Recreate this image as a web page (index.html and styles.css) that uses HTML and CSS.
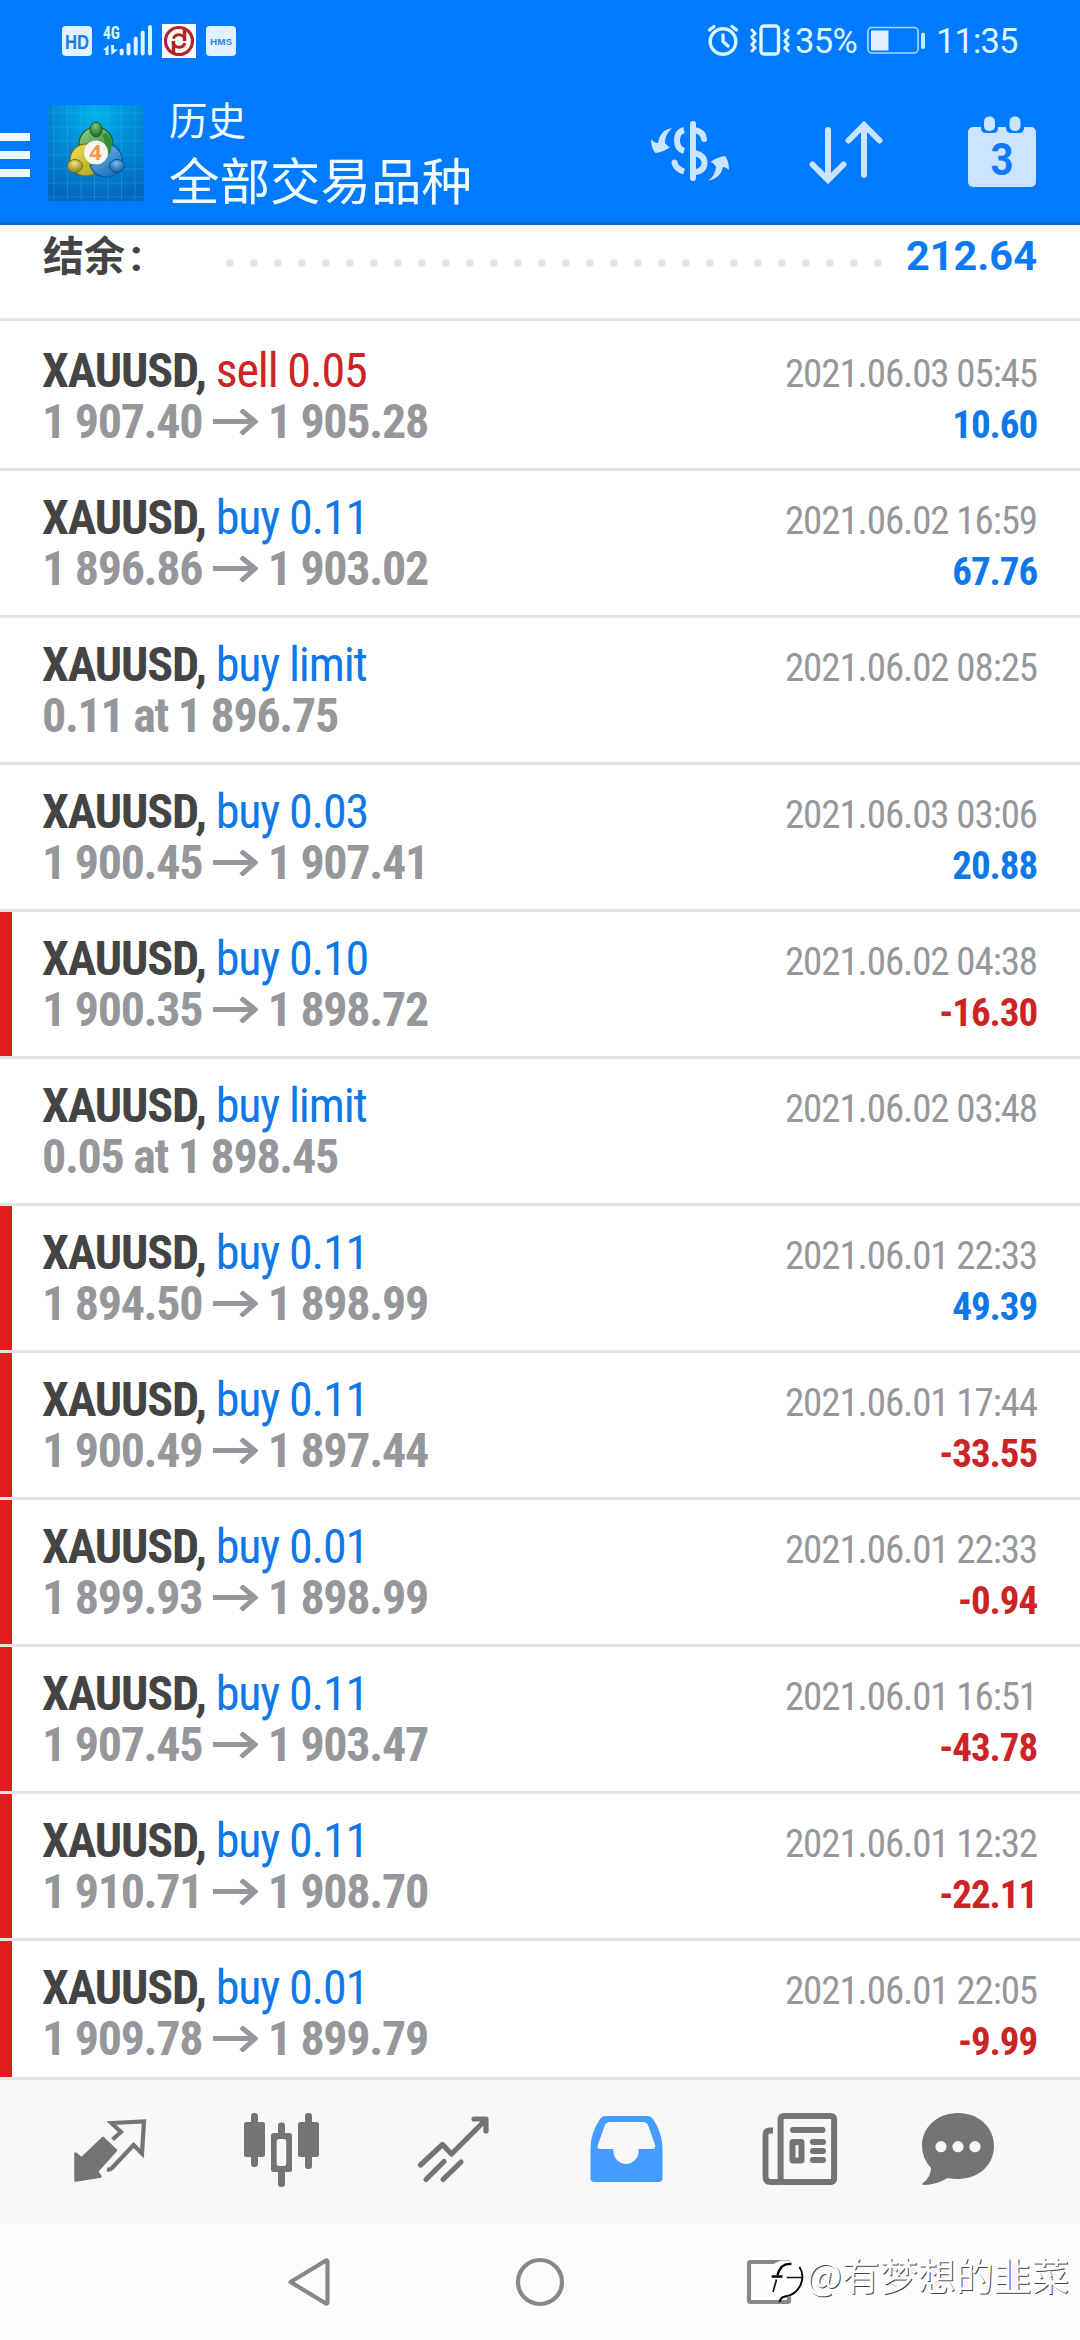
FILE: index.html
```html
<!DOCTYPE html>
<html lang="zh-CN">
<head>
<meta charset="utf-8">
<title>历史</title>
<link rel="stylesheet" href="styles.css">
</head>
<body>
<svg class="defs" aria-hidden="true">
  <symbol id="arrow" viewBox="0 0 45 26">
    <path d="M0 12.5H42M28 1L42 12.5L28 25" fill="none" stroke="currentColor" stroke-width="5"/>
  </symbol>
</svg>
<div class="app">
  <header class="top">
    <div class="status">
      <svg class="status-left" viewBox="0 0 540 80">
        <rect x="62" y="26" width="30" height="30" rx="4" fill="#e2f0ff"/>
        <text class="hd" x="77" y="48.5" text-anchor="middle" textLength="24" lengthAdjust="spacingAndGlyphs">HD</text>
        <text class="net" x="103" y="38.5" textLength="17" lengthAdjust="spacingAndGlyphs">4G</text>
        <path d="M103 50L108.500 45V55H105.500V50ZM111 45H114V49.500H118L111.500 55Z" fill="#d8f6ff"/>
        <path d="M121.700 50.500V53.500M128.500 45V53.500M135.700 38.500V53.500M142.700 32.500V53.500M150 27V53.500" stroke="#d8f6ff" stroke-width="4" stroke-linecap="round"/>
        <rect x="162" y="24" width="34" height="34" fill="#fff"/>
        <g fill="none" stroke="#b52424">
          <circle cx="179" cy="41" r="13.500" stroke-width="3.200"/>
          <circle cx="179" cy="41" r="6.200" stroke-width="3" stroke-dasharray="15.500 4" stroke-dashoffset="-2"/>
          <path d="M173.500 41V53M184.500 41V29" stroke-width="3.400"/>
        </g>
        <rect x="206" y="26" width="30" height="30" rx="4" fill="#e2f0ff"/>
        <text class="hms" x="221" y="44.500" text-anchor="middle" textLength="22" lengthAdjust="spacingAndGlyphs">HMS</text>
      </svg>
      <div class="status-right">
        <svg width="88" height="80" viewBox="706 0 88 80" fill="none" stroke="#d8f6ff" stroke-linecap="round">
          <circle cx="723" cy="41.500" r="12.800" stroke-width="3.400"/>
          <path d="M709.500 30L714 26.500M732 26.500L736.500 30M723 35V41.500L728 46" stroke-width="3.400"/>
          <rect x="761" y="26" width="17.500" height="28" rx="3" stroke-width="3.400"/>
          <path d="M752 30L755 33.500L752 37L755 41L752 44.500L755 48L752 51M788 30L785 33.500L788 37L785 41L788 44.500L785 48L788 51" stroke-width="3"/>
        </svg>
        <span class="percent">35%</span>
        <svg class="battery" width="60" height="80" viewBox="866 0 60 80">
          <rect x="868" y="27.500" width="50" height="25.500" rx="4" fill="none" stroke="#a6dbff" stroke-width="1.600"/>
          <rect x="871" y="30.500" width="17.500" height="20" fill="#e2f0ff"/>
          <rect x="921" y="32.500" width="4" height="16.500" rx="2" fill="#c4eaff"/>
        </svg>
        <span class="clock">11:35</span>
      </div>
    </div>
    <div class="bar">
      <div class="menu"><i></i><i></i><i></i></div>
      <svg class="logo" viewBox="0 0 96 96">
        <defs>
          <radialGradient id="bg" cx=".5" cy=".1" r=".9"><stop offset="0" stop-color="#00b4ea"/><stop offset=".5" stop-color="#0089d6"/><stop offset="1" stop-color="#0068be"/></radialGradient>
          <linearGradient id="gr" x2=".7" y2="1"><stop offset="0" stop-color="#9bd08c"/><stop offset="1" stop-color="#23852f"/></linearGradient>
          <linearGradient id="ye" x2="1" y2="1"><stop offset="0" stop-color="#efe25a"/><stop offset="1" stop-color="#a89c1c"/></linearGradient>
          <linearGradient id="bl" x2=".6" y2="1"><stop offset="0" stop-color="#83c4f0"/><stop offset="1" stop-color="#1672bd"/></linearGradient>
          <radialGradient id="gb" cx=".45" cy=".3" r=".7"><stop offset="0" stop-color="#82c676"/><stop offset="1" stop-color="#156a26"/></radialGradient>
          <radialGradient id="yb" cx=".45" cy=".3" r=".7"><stop offset="0" stop-color="#ece37c"/><stop offset="1" stop-color="#8c8518"/></radialGradient>
          <radialGradient id="bb" cx=".45" cy=".3" r=".7"><stop offset="0" stop-color="#79bbea"/><stop offset="1" stop-color="#095aa3"/></radialGradient>
        </defs>
        <rect width="96" height="96" fill="url(#bg)"/>
        <path d="M6 0V96M19.500 0V96M33 0V96M46.500 0V96M60 0V96M73.500 0V96M87 0V96M0 8H96M0 22H96M0 36H96M0 50H96M0 64H96M0 78H96M0 92H96" stroke="#58baf0" stroke-width=".7" opacity=".4"/>
        <circle cx="48" cy="39" r="17" fill="url(#gr)" stroke="#17632a" stroke-width="1.200"/>
        <circle cx="38" cy="55" r="16" fill="url(#ye)" stroke="#716c18" stroke-width="1.200"/>
        <path d="M58 39A16.500 16.500 0 1 1 42 60Q60 60 58 39Z" fill="url(#bl)" stroke="#0b559a" stroke-width="1.200"/>
        <path d="M58 28Q68 38 61 50L55 44Q59 37 54 30Z" fill="#2e9138"/>
        <ellipse cx="48" cy="24.500" rx="6" ry="7.500" fill="url(#gb)" stroke="#175e28"/>
        <ellipse cx="27" cy="61" rx="7.500" ry="6.500" fill="url(#yb)" stroke="#77711a"/>
        <ellipse cx="69" cy="61" rx="7.500" ry="6.500" fill="url(#bb)" stroke="#0a559b"/>
        <circle cx="48" cy="47.500" r="12" fill="#f5f5f3"/>
        <text class="four" x="47.500" y="55" text-anchor="middle">4</text>
      </svg>
      <div class="titles">
        <div class="title">历史</div>
        <div class="subtitle">全部交易品种</div>
      </div>
      <svg class="actions" viewBox="640 80 440 142" fill="none" stroke="#cbe4ff" stroke-width="6" stroke-linecap="round">
        <path d="M693 124V178"/>
        <path d="M684 130Q677 132 677 140.500Q677 149 684 151" stroke-linecap="butt"/>
        <path d="M674.500 163Q676 169 684 171.500" stroke-linecap="butt"/>
        <circle cx="674.500" cy="162.500" r="2.900" fill="#cbe4ff" stroke="none"/>
        <path d="M694 130Q703 131 704 139M694 153Q704.500 155 704.500 163Q704.500 171 694 172.500"/>
        <g fill="#cbe4ff" stroke="none">
          <path d="M672 128Q660 130 658 143Q654 143 651 139Q651 148 655.500 153Q664 152 670 147Q667 146 665 143Q665 134 672 128Z"/>
          <path d="M708 181Q715 176 716 167Q714 163 710.500 162Q717 157 725 156Q729 161 729 170Q726 167 723 167Q721 178 708 181Z"/>
        </g>
        <path d="M828 130V179M812.500 164.500L828 180L843.500 164.500M864 175V126M848.500 140.500L864 125L879.500 140.500"/>
        <g stroke="none" fill="#cbe4ff">
          <rect x="968" y="127" width="68" height="60" rx="5"/>
          <path d="M981 127H998V128Q998 133 993 133H986Q981 133 981 128ZM1006 127H1024V128Q1024 133 1019 133H1011Q1006 133 1006 128Z" fill="#007aff"/>
          <rect x="984" y="116.500" width="11" height="14.500" rx="5"/>
          <rect x="1009.500" y="116.500" width="11" height="14.500" rx="5"/>
        </g>
        <text class="day" x="1002" y="174.500" text-anchor="middle" textLength="23" lengthAdjust="spacingAndGlyphs">3</text>
      </svg>
    </div>
  </header>

  <main class="history">
    <section class="balance"><span class="label">结余<span class="colon">:</span></span><span class="dots"></span><span class="amount">212.64</span></section>
    <article class="deal first"><div class="line"><span class="sym"><b>XAUUSD,</b> <span class="sell">sell 0.05</span></span><time>2021.06.03 05:45</time></div><div class="line"><span class="price">1 907.40 <svg><use href="#arrow"/></svg> 1 905.28</span><span class="gain">10.60</span></div></article>
    <article class="deal"><div class="line"><span class="sym"><b>XAUUSD,</b> <span class="buy">buy 0.11</span></span><time>2021.06.02 16:59</time></div><div class="line"><span class="price">1 896.86 <svg><use href="#arrow"/></svg> 1 903.02</span><span class="gain">67.76</span></div></article>
    <article class="deal"><div class="line"><span class="sym"><b>XAUUSD,</b> <span class="buy">buy limit</span></span><time>2021.06.02 08:25</time></div><div class="line"><span class="price">0.11 at 1 896.75</span></div></article>
    <article class="deal"><div class="line"><span class="sym"><b>XAUUSD,</b> <span class="buy">buy 0.03</span></span><time>2021.06.03 03:06</time></div><div class="line"><span class="price">1 900.45 <svg><use href="#arrow"/></svg> 1 907.41</span><span class="gain">20.88</span></div></article>
    <article class="deal stopped"><div class="line"><span class="sym"><b>XAUUSD,</b> <span class="buy">buy 0.10</span></span><time>2021.06.02 04:38</time></div><div class="line"><span class="price">1 900.35 <svg><use href="#arrow"/></svg> 1 898.72</span><span class="loss">-16.30</span></div></article>
    <article class="deal"><div class="line"><span class="sym"><b>XAUUSD,</b> <span class="buy">buy limit</span></span><time>2021.06.02 03:48</time></div><div class="line"><span class="price">0.05 at 1 898.45</span></div></article>
    <article class="deal stopped"><div class="line"><span class="sym"><b>XAUUSD,</b> <span class="buy">buy 0.11</span></span><time>2021.06.01 22:33</time></div><div class="line"><span class="price">1 894.50 <svg><use href="#arrow"/></svg> 1 898.99</span><span class="gain">49.39</span></div></article>
    <article class="deal stopped"><div class="line"><span class="sym"><b>XAUUSD,</b> <span class="buy">buy 0.11</span></span><time>2021.06.01 17:44</time></div><div class="line"><span class="price">1 900.49 <svg><use href="#arrow"/></svg> 1 897.44</span><span class="loss">-33.55</span></div></article>
    <article class="deal stopped"><div class="line"><span class="sym"><b>XAUUSD,</b> <span class="buy">buy 0.01</span></span><time>2021.06.01 22:33</time></div><div class="line"><span class="price">1 899.93 <svg><use href="#arrow"/></svg> 1 898.99</span><span class="loss">-0.94</span></div></article>
    <article class="deal stopped"><div class="line"><span class="sym"><b>XAUUSD,</b> <span class="buy">buy 0.11</span></span><time>2021.06.01 16:51</time></div><div class="line"><span class="price">1 907.45 <svg><use href="#arrow"/></svg> 1 903.47</span><span class="loss">-43.78</span></div></article>
    <article class="deal stopped"><div class="line"><span class="sym"><b>XAUUSD,</b> <span class="buy">buy 0.11</span></span><time>2021.06.01 12:32</time></div><div class="line"><span class="price">1 910.71 <svg><use href="#arrow"/></svg> 1 908.70</span><span class="loss">-22.11</span></div></article>
    <article class="deal stopped"><div class="line"><span class="sym"><b>XAUUSD,</b> <span class="buy">buy 0.01</span></span><time>2021.06.01 22:05</time></div><div class="line"><span class="price">1 909.78 <svg><use href="#arrow"/></svg> 1 899.79</span><span class="loss">-9.99</span></div></article>
  </main>

  <nav class="tabs">
    <svg viewBox="0 2080 180 144">
      <path d="M75.500 2153.500L81.600 2158.500L103 2138L116 2150.500L97 2171.500L100.500 2176.500L76 2180.500H75.500Z" fill="#747474" stroke="#747474" stroke-width="2.500" stroke-linejoin="round"/>
      <path d="M112.500 2139.500L121 2132L111.500 2123L144 2121.500L142 2153.500L133.500 2145L112 2168Q110 2170 107 2169.500" fill="none" stroke="#747474" stroke-width="4.200"/>
    </svg>
    <svg viewBox="180 2080 180 144" fill="#747474">
      <rect x="251" y="2113" width="7" height="54" rx="3"/><rect x="244" y="2122" width="21" height="35" rx="2.500"/>
      <rect x="305" y="2113" width="7" height="56" rx="3"/><rect x="298" y="2122" width="21" height="35" rx="2.500"/>
      <rect x="278" y="2122.500" width="7" height="64.500" rx="3"/><rect x="271" y="2133" width="21" height="39" rx="2.500"/>
      <rect x="276.700" y="2139" width="9.500" height="27" rx="2.500" fill="#f7f7f7"/>
    </svg>
    <svg viewBox="360 2080 180 144" fill="none" stroke="#747474" stroke-width="5.200" stroke-linecap="round" stroke-linejoin="round">
      <path d="M420.500 2165L442.500 2144.500L451.500 2154L485 2120.500M474 2119H486V2131"/>
      <path d="M426 2179.500L444 2161.500M443 2179.500L461 2162"/>
    </svg>
    <svg viewBox="540 2080 180 144">
      <path fill="#449cff" fill-rule="evenodd" d="M605 2116H648Q651 2116 653 2119Q662.500 2133 662.500 2149V2178Q662.500 2182 658.500 2182H594.500Q590.500 2182 590.500 2178V2149Q590.500 2133 600 2119Q602 2116 605 2116ZM610 2122Q606 2122 604.500 2126L597.800 2145Q597 2149 600 2149H613.500V2151.500A12.500 12.500 0 0 0 638.500 2151.500V2149H652Q656 2149 655 2145L648.500 2126Q647 2122 643 2122Z"/>
    </svg>
    <svg viewBox="720 2080 180 144" fill="none" stroke="#747474" stroke-width="6">
      <rect x="780.600" y="2116" width="53.500" height="66" rx="3"/>
      <path d="M773 2130.500H770Q765.500 2130.500 765.500 2135V2177Q765.500 2182 770.500 2182H782" stroke-width="5.800"/>
      <path d="M793 2130H822.500M813 2142H823M813 2151H823M813 2160H823" stroke-linecap="round"/>
      <rect x="792.500" y="2142" width="9" height="18.500" rx=".5"/>
    </svg>
    <svg viewBox="900 2080 180 144">
      <path d="M958 2113C978.500 2113 994 2127 994 2146C994 2165 978.500 2179 958 2179Q952 2179 947.500 2178Q936 2185 924 2185Q921 2184.500 923 2183Q931 2177 931 2168Q922 2158 922 2146C922 2127 937.500 2113 958 2113Z" fill="#747474"/>
      <g fill="#f7f7f7"><circle cx="941" cy="2146.700" r="5.600"/><circle cx="958" cy="2146.700" r="5.600"/><circle cx="975" cy="2146.700" r="5.600"/></g>
    </svg>
  </nav>

  <footer class="system">
    <svg viewBox="0 2224 1080 116" fill="none" stroke="#888" stroke-width="4.200" stroke-linejoin="round">
      <path d="M290.500 2282L326 2260.500Q327.500 2260 327.500 2262V2302Q327.500 2304 326 2303.500Z"/>
      <circle cx="540" cy="2282" r="22"/>
      <rect x="749" y="2262" width="40" height="40" rx="1.500"/>
    </svg>
    <div class="watermark">
      <svg viewBox="762 2256 44 52" fill="none">
        <ellipse cx="784.500" cy="2279" rx="18.500" ry="18.500" fill="#fff"/>
        <path d="M791.500 2264Q781 2262.500 777.500 2275M771.700 2276.500H782.500" stroke="#000" stroke-width="2.400"/>
        <path d="M786.700 2277.500H802.500M776.500 2279.500L773 2292" stroke="#111" stroke-width="1.700"/>
        <path d="M799.500 2267C806 2277 801 2294 785 2296.500Q780.500 2297.500 779.500 2302" stroke="#000" stroke-width="1.900"/>
      </svg>
      <span>@有梦想的韭菜</span>
    </div>
  </footer>
</div>
</body>
</html>
```
FILE: styles.css
```css
* { box-sizing: border-box; }
body {
  margin: 0;
  background: #fff;
  font-family: "Roboto Condensed", Roboto, "Noto Sans CJK SC", sans-serif;
}
svg { display: block; }
.defs { display: none; }
.app {
  width: 1080px;
  height: 2340px;
  display: flex;
  flex-direction: column;
  overflow: hidden;
}

/* header */
.top {
  height: 225px;
  flex: none;
  background: #007aff;
  border-bottom: 3px solid #126ac8;
}
.status { height: 80px; display: flex; }
.status-left { width: 540px; height: 80px; flex: none; }
.status-right {
  display: flex;
  flex: 1;
  padding-left: 166px;
  color: #dcf6ff;
  font: 34.500px/82px Roboto, sans-serif;
  white-space: nowrap;
}
.percent { width: 72px; padding-left: 1px; letter-spacing: -0.6px; }
.clock { padding-left: 10px; letter-spacing: -0.9px; }
.hd { font: 700 21px "Liberation Sans", sans-serif; fill: #1b7de8; }
.net { font: 700 19px "Roboto Condensed", sans-serif; fill: #d8f6ff; }
.hms { font: 700 9.5px "Liberation Sans", sans-serif; fill: #2f86e8; }
.bar { height: 142px; display: flex; }
.menu {
  width: 30px;
  margin-right: 18px;
  padding-top: 53px;
  display: flex;
  flex-direction: column;
  gap: 10px;
}
.menu i { height: 8px; background: #edf9ff; }
.logo { width: 96px; height: 96px; margin-top: 25px; flex: none; }
.four { font: 700 22px "Open Sans", sans-serif; fill: #f39a45; }
.titles {
  width: 496px;
  padding: 10px 0 0 25px;
  color: #f0fcff;
  font-family: "Noto Sans CJK SC", sans-serif;
  white-space: nowrap;
}
.title { font-size: 38.500px; line-height: 56px; }
.subtitle { font-size: 50.500px; line-height: 64px; }
.actions { width: 440px; height: 142px; flex: none; }
.day { font: 700 44px Roboto, sans-serif; fill: #0f7af5; stroke: none; }

/* history list */
.history { height: 1852px; flex: none; overflow: hidden; }
.balance {
  height: 96px;
  display: flex;
  border-bottom: 3px solid #e4e4e4;
  padding: 0 43px;
  line-height: 60px;
}
.label {
  width: 183px;
  color: #444;
  font: 700 41px/56px "Noto Sans CJK SC", sans-serif;
}
.colon { margin-left: 5px; font-family: Roboto, sans-serif; font-size: 45px; line-height: 1; }
.dots {
  width: 672px;
  height: 24px;
  margin-top: 26px;
  margin-left: -8px;
  background: radial-gradient(circle, #e4e4e4 3.4px, transparent 4.1px) 0 0 / 24px 24px;
}
.amount {
  margin-left: auto;
  color: #0a79f2;
  font: 700 41.500px/61px Roboto, sans-serif;
}
.deal {
  height: 147px;
  padding: 21px 43px 0 42px;
  border-bottom: 3px solid #e4e4e4;
  position: relative;
}
.first { height: 150px; padding-top: 24px; }
.stopped::before {
  content: "";
  position: absolute;
  left: 0;
  top: 0;
  width: 12px;
  height: 144px;
  background: #e01e1e;
}
.line {
  height: 51px;
  display: flex;
  justify-content: space-between;
  align-items: baseline;
  line-height: 51px;
  white-space: nowrap;
}
.sym { font-size: 48px; letter-spacing: -1.15px; }
.sym b { color: #444; }
.price { font-size: 48px; font-weight: 700; letter-spacing: -1.3px; color: #96979b; }
.price svg { display: inline-block; width: 45px; height: 26px; margin-left: 1px; vertical-align: 3px; }
time { font-size: 39px; letter-spacing: -1.1px; color: #96979b; }
.gain, .loss { font-size: 39px; font-weight: 700; letter-spacing: -1.1px; }
.buy, .gain { color: #0f78e8; }
.sell, .loss { color: #cc2424; }

/* bottom bars */
.tabs {
  height: 147px;
  flex: none;
  display: flex;
  background: #f7f7f7;
  border-top: 3px solid #e4e4e4;
}
.tabs svg { width: 180px; height: 144px; }
.system { height: 116px; flex: none; position: relative; background: #fcfcfc; }
.system > svg { width: 1080px; height: 116px; }
.watermark {
  position: absolute;
  left: 762px;
  top: 24px;
  display: flex;
  color: #fff;
  font: 37.900px/52px "Noto Sans CJK SC", sans-serif;
  text-shadow: 1px 1px 0.4px #444;
  white-space: nowrap;
}
.watermark svg { width: 44px; height: 52px; margin-top: 8px; }
```
